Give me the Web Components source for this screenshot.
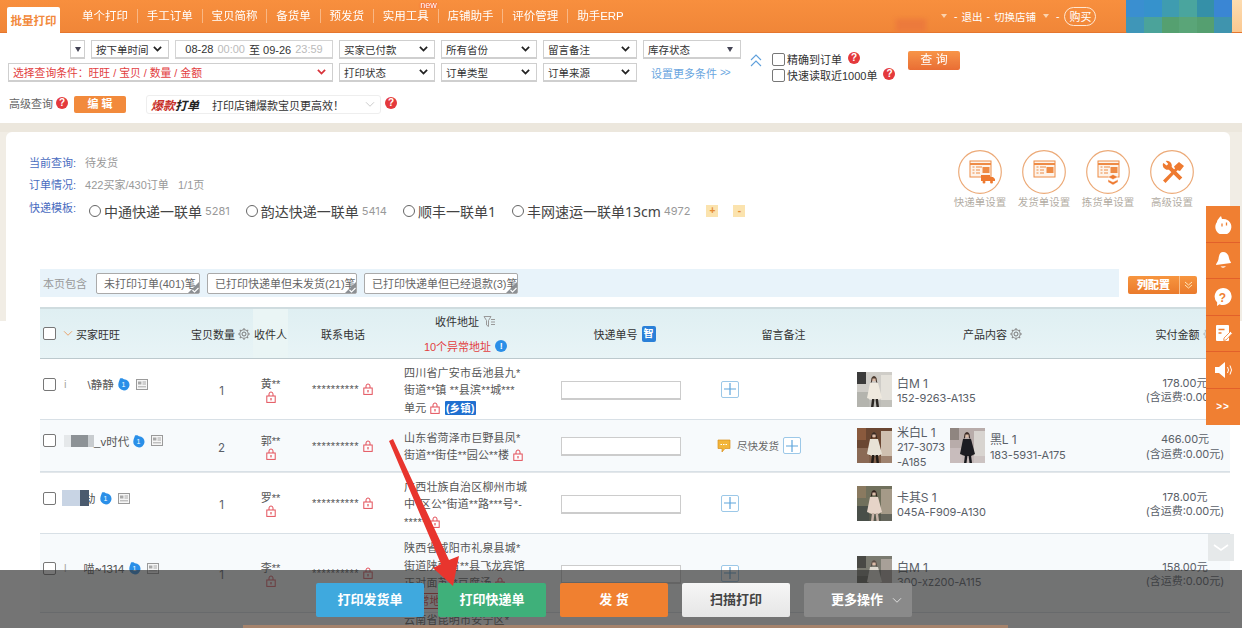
<!DOCTYPE html>
<html lang="zh"><head><meta charset="utf-8"><title>批量打印</title>
<style>
html,body{margin:0;padding:0;width:1242px;height:628px;overflow:hidden;background:#fff}
body{font-family:"Liberation Sans","Noto Sans CJK SC",sans-serif;font-size:12px;color:#444}
</style></head>
<body>
<x-app></x-app>
<script>
const FONT='"Liberation Sans","Noto Sans CJK SC",sans-serif';
const LAT='Inter,"Noto Sans CJK SC",sans-serif';
function def(name,css,html,init){
  customElements.define(name,class extends HTMLElement{
    connectedCallback(){
      if(this.shadowRoot)return;
      const r=this.attachShadow({mode:'open'});
      const body=typeof html==='function'?html(this):html;
      r.innerHTML='<style>'+css+'</style>'+body;
      if(init)init(this,r);
    }
  });
}
const chev=(c,w=9,sw=2)=>`<svg width="${w}" height="${Math.round(w*.65)}" viewBox="0 0 10 6.5"><path d="M1 1l4 4 4-4" fill="none" stroke="${c}" stroke-width="${sw}"/></svg>`;

def('x-help',`:host{display:inline-flex;width:12px;height:12px;border-radius:50%;background:#e4393c;color:#fff;font:bold 10px/12px ${FONT};align-items:center;justify-content:center;flex:none}`,'?');

def('x-check',`:host{display:inline-block;width:11px;height:11px;border:1px solid #777;border-radius:2px;background:#fff;flex:none}`,'');

def('x-lock',`:host{display:inline-block;width:10px;height:12px;vertical-align:-2px;flex:none}svg{display:block}`,
 `<svg width="10" height="12" viewBox="0 0 10 12"><path d="M3 5V3a2 2 0 014 0v2" fill="none" stroke="#e3505a" stroke-width="1"/><rect x=".8" y="5" width="8.4" height="6.4" fill="#fff" fill-opacity=".6" stroke="#e3505a" stroke-width="1"/><rect x="4.4" y="7" width="1.2" height="2.4" fill="#e3505a"/></svg>`);

def('x-plus',`:host{display:inline-flex;box-sizing:border-box;width:18px;height:17px;border:1px solid #9cc8e8;border-radius:2px;background:#fff;align-items:center;justify-content:center;flex:none}`,
 `<svg width="12" height="12" viewBox="0 0 12 12"><path d="M6 0v12M0 6h12" stroke="#5fa6dc" stroke-width="1.2"/></svg>`);

def('x-gear',`:host{display:inline-block;width:12px;height:12px;flex:none;vertical-align:-2px}svg{display:block}`,
 `<svg width="12" height="12" viewBox="0 0 12 12"><circle cx="6" cy="6" r="2" fill="none" stroke="#777" stroke-width="1"/><circle cx="6" cy="6" r="4.2" fill="none" stroke="#888" stroke-width="1.1"/><path d="M6 0v2M6 10v2M0 6h2M10 6h2M1.8 1.8l1.4 1.4M8.8 8.8l1.4 1.4M1.8 10.2l1.4-1.4M8.8 3.2l1.4-1.4" stroke="#888" stroke-width="1.1"/></svg>`);

def('x-drop',`:host{display:inline-block;width:14px;height:14px;flex:none}svg{display:block}`,
 `<svg width="14" height="14" viewBox="0 0 14 14"><path d="M4 1.5C6 .8 7 1.5 8 2.2a5.6 5.6 0 11-5.6 4.6C2.6 5 3.4 3.4 4 1.5z" fill="#2a8fe8"/><text x="7.4" y="10" font-size="7" font-family="Liberation Sans" fill="#fff" text-anchor="middle">1</text></svg>`);

def('x-idcard',`:host{display:inline-block;width:12px;height:11px;flex:none}svg{display:block}`,
 `<svg width="12" height="11" viewBox="0 0 12 11"><rect x=".5" y=".5" width="11" height="10" fill="#f6f6f6" stroke="#9a9a9a"/><rect x="2" y="2.5" width="3.4" height="3" fill="#a8a8a8"/><path d="M6.5 3h3.5M6.5 5h3.5M2 7.8h8" stroke="#a8a8a8"/></svg>`);

def('x-select',`
 :host{display:flex;align-items:center;box-sizing:border-box;height:var(--h,19px);background:#fff;border:1px solid #cfcfcf;border-bottom-width:2px;color:#333;font-size:10.5px;padding:0 6px 0 4px;white-space:nowrap;overflow:hidden}
 :host([red]){color:#e2403f;font-size:10.8px}
 span{flex:1}
 .tri{width:0;height:0;border:3px solid transparent;border-top:5px solid #445;border-bottom:0;margin-right:1px}`,
 h=>`<span><slot></slot></span>`+(h.hasAttribute('tri')?`<i class="tri"></i>`:chev(h.hasAttribute('red')?'#d8333a':'#222')));

def('x-top-nav',`
 :host{display:flex;height:33px;background:linear-gradient(#f88f3e,#f08638);border-bottom:1px solid #e5762e;box-sizing:border-box;color:#fff;font-size:11.5px}
 nav{display:flex;align-items:center;padding-left:7px}
 .on{align-self:flex-end;width:53px;height:26px;background:#fff;color:#f28a3c;font-weight:bold;display:flex;align-items:center;justify-content:center;border-radius:2px 2px 0 0;margin-right:13px;margin-bottom:-1px}
 a{position:relative;padding:0 8.9px;line-height:14px;border-right:1px solid #f9b784;white-space:nowrap}
 a.last{border:0}
 sup{position:absolute;right:1px;top:-8px;font:9px/9px ${FONT};color:#fff;text-shadow:0 0 2px #e33}
 .right{margin-left:auto;display:flex;align-items:center;gap:4px;color:#fff;white-space:nowrap;font-size:10.5px}
 .smudge{width:30px;height:13px;background:#ec7a3c;align-self:flex-end;margin-right:8px;filter:blur(2px)}
 .tri{width:0;height:0;border:3px solid transparent;border-top:4px solid #fbd2ae;border-bottom:0;margin:0 3px}
 .buy{border:1px solid #ffe7d2;border-radius:11px;height:19px;line-height:18px;width:32px;box-sizing:border-box;text-align:center;margin-left:1px;font-size:11px}
 .mosaic{margin-left:30px;display:grid;grid-template-columns:repeat(6,17.6px);grid-auto-rows:17px;height:34px;border-radius:0 0 3px 3px;overflow:hidden;flex:none;align-self:flex-start}
 .edge{width:10px;background:linear-gradient(#fddcb0,#fbc890);flex:none}`,
 `<nav><span class="on">批量打印</span><a>单个打印</a><a>手工订单</a><a>宝贝简称</a><a>备货单</a><a>预发货</a><a>实用工具<sup>new</sup></a><a>店铺助手</a><a>评价管理</a><a class="last">助手ERP</a></nav>
 <div class="right"><i class="smudge"></i><i class="tri"></i><span>-</span><span>退出</span><span>-</span><span>切换店铺</span><i class="tri"></i><span>-</span><span class="buy">购买</span></div>
 <div class="mosaic">${['#3a8fd0','#3692cc','#3f9cb0','#4aa59e','#3590a8','#3a86d4','#3f96b8','#4ba39a','#55a070','#5aa578','#559f70','#3f94ae'].map(c=>`<i style="background:${c}"></i>`).join('')}</div><div class="edge"></div>`);

def('x-filter-panel',`
 :host{display:block;height:90px;background:#fff;box-sizing:border-box;padding-top:7px;position:relative;color:#444}
 .top{display:flex;align-items:flex-start;padding-left:8px}
 .grid{display:grid;grid-template-columns:325px 96px 96px 94px 98px;column-gap:6px;row-gap:4px;grid-template-rows:19px 19px}
 .dates{display:flex;justify-content:flex-end;gap:6px}
 .date{width:158px;box-sizing:border-box;border:1px solid #d4d4d4;border-bottom-width:2px;background:#fff;display:flex;align-items:center;justify-content:center;gap:4px;color:#333;font-size:11px;white-space:nowrap}
 .date i{font-style:normal;color:#bbb}
 .more{color:#6aa6e0;font-size:11px;padding-left:8px;display:flex;align-items:center;white-space:nowrap}
 .more b{font-weight:400;font-size:10px;letter-spacing:-1px;margin-left:3px}
 .up{margin:14px 10px 0 9px;width:12px;flex:none}
 .checks{margin-top:12px;display:flex;flex-direction:column;gap:2px;width:136px;flex:none}
 .checks div{display:flex;align-items:center;gap:2px;height:14px;white-space:nowrap;color:#333;font-size:11px}
 .checks x-help{margin-left:4px;margin-top:-3px}
 .q{margin-top:11px;width:52px;height:19px;background:linear-gradient(#f8903f,#e8662a);border-radius:2px;color:#fff;text-align:center;line-height:19px;font-size:12px;opacity:.95;flex:none}
 .adv{display:flex;align-items:center;padding-left:9px;margin-top:13px;color:#666;font-size:11px}
 .adv>span{margin-top:-3px}
 .edit{width:52px;height:17px;background:#f28a3c;color:#fff;font-weight:bold;text-align:center;line-height:17px;border-radius:2px;margin:0 20px 0 6px;font-size:11px}
 .adv x-help{margin-left:3px;margin-top:-4px}
 .hot{display:flex;align-items:center;width:235px;height:19px;box-sizing:border-box;border:1px solid #eee;border-radius:3px;padding:0 5px 0 4px;color:#333}
 .hot b{font-style:italic;font-size:12px;color:#222;margin-right:13px;white-space:nowrap}
 .hot b em{color:#c8302a;font-style:italic}
 .hot span{flex:1;font-size:11px;white-space:nowrap}
 .hotq{margin-left:4px !important}`,
 `<div class="top">
  <div class="grid">
   <div class="dates"><x-select tri style="width:15px;padding:0 2px;justify-content:flex-end"></x-select><x-select style="width:78px">按下单时间</x-select><div class="date">08-28 <i>00:00</i> 至 09-26 <i>23:59</i></div></div>
   <x-select>买家已付款</x-select><x-select>所有省份</x-select><x-select>留言备注</x-select><x-select tri>库存状态</x-select>
   <x-select red style="--h:19px">选择查询条件：旺旺 / 宝贝 / 数量 / 金额</x-select>
   <x-select>打印状态</x-select><x-select>订单类型</x-select><x-select>订单来源</x-select><div class="more">设置更多条件<b>&gt;&gt;</b></div>
  </div>
  <svg class="up" width="12" height="13" viewBox="0 0 12 13"><path d="M1 6l5-5 5 5M1 12l5-5 5 5" fill="none" stroke="#5fa0dc" stroke-width="1.1"/></svg>
  <div class="checks"><div><x-check></x-check><span>精确到订单</span><x-help></x-help></div><div><x-check></x-check><span>快速读取近1000单</span><x-help></x-help></div></div>
  <div class="q">查 询</div>
 </div>
 <div class="adv"><span>高级查询</span><x-help></x-help><div class="edit">编 辑</div>
  <div class="hot"><b><em>爆款</em>打单</b><span>打印店铺爆款宝贝更高效！</span>${chev('#ccc',10,1)}</div><x-help class="hotq"></x-help></div>`);

const doc=`<rect x="12" y="11" width="21" height="16" fill="#fdf3ea" stroke="#ee8b45" stroke-width="1"/><path d="M12 14h21" stroke="#ee8b45" stroke-width="2"/><path d="M14.5 17h2M14.5 20h2M14.5 23h2M18 17h6M18 20h4M18 23h4" stroke="#ee8b45" stroke-width="1.2"/><rect x="24.5" y="17" width="7" height="6" fill="#ee8b45"/>`;
const setIcons={
 a:doc+`<rect x="23" y="25" width="9" height="6" fill="#ee7a30"/><path d="M32 27h3l2 2v2h-5z" fill="#ee7a30"/><circle cx="26" cy="32" r="1.5" fill="#ee7a30"/><circle cx="33.5" cy="32" r="1.5" fill="#ee7a30"/>`,
 b:doc,
 c:doc+`<path d="M22 27l5-2.5 5 2.5-5 2.5zM22 29.5l5 2.5 5-2.5v2.5l-5 3-5-3z" fill="#ee7a30" stroke="#fff" stroke-width=".5"/>`,
 d:`<path d="M13.500 13l3 2.500 1.800-1.600-2.600-3a5 5 0 016 6l10.600 10.600-2.800 2.800L18.900 19.700a5 5 0 01-6-6z" fill="#ee7a30"/><path d="M13 30.500L25 18.500l-1-2 5-4.500 5 4-4 5-2.500-.8L15.500 33z" fill="#ee7a30"/>`
};
def('x-set-icon',`:host{display:flex;flex-direction:column;align-items:center;width:62px;color:#b3ada4;font-size:10.5px;white-space:nowrap}svg{display:block;margin-bottom:0}`,
 h=>`<svg width="44" height="44" viewBox="0 0 44 44"><circle cx="22" cy="22" r="21.300" fill="#fff" stroke="#ecaa78" stroke-width="1.200"/>${setIcons[h.getAttribute('i')]}</svg><slot></slot>`);

def('x-radio',`:host{display:inline-flex;align-items:center;white-space:nowrap;color:#444;font:14px "Noto Sans","Noto Sans CJK SC",sans-serif;margin-right:var(--m,16px)}
 i{width:10px;height:10px;border:1px solid #666;border-radius:50%;margin-right:3px;flex:none}
 small{font:11px ${LAT};color:#999;margin-left:3px}`,
 h=>`<i></i><slot></slot>${h.getAttribute('n')?`<small>${h.getAttribute('n')}</small>`:''}`);

def('x-query-info',`
 :host{display:flex;padding-top:19px;height:69px;color:#999;font-size:11px}
 .rows{display:flex;flex-direction:column;padding-left:23px}
 .r{height:22px;display:flex;align-items:center;white-space:nowrap}
 label{color:#4a6cc0;margin-right:9px}
 .r.t{align-items:flex-start;padding-top:1px}
 .r.t label{margin:3px 13px 0 0}
 .r.t section{display:flex;align-items:center;margin-top:5px}
 .sq{width:12px;height:12px;background:#fbe3ae;color:#e58a34;display:flex;align-items:center;justify-content:center;font:bold 10px/12px ${FONT};margin:0 15px 0 0}
 .icons{margin-left:auto;margin-right:27px;display:flex;gap:2px;align-self:flex-start;margin-top:-1px}`,
 `<div class="rows"><div class="r"><label>当前查询:</label>待发货</div><div class="r"><label>订单情况:</label>422买家/430订单&nbsp;&nbsp;&nbsp;1/1页</div>
 <div class="r t"><label>快递模板:</label><section><x-radio n="5281">中通快递一联单</x-radio><x-radio n="5414">韵达快递一联单</x-radio><x-radio>顺丰一联单1</x-radio><x-radio n="4972">丰网速运一联单13cm</x-radio><span class="sq">+</span><span class="sq">-</span></section></div></div>
 <div class="icons"><x-set-icon i="a">快递单设置</x-set-icon><x-set-icon i="b">发货单设置</x-set-icon><x-set-icon i="c">拣货单设置</x-set-icon><x-set-icon i="d">高级设置</x-set-icon></div>`);

def('x-tag',`:host{position:relative;display:flex;align-items:center;box-sizing:border-box;height:21px;border:1px solid #aaa;border-radius:2px;background:#fff;color:#666;font-size:11px;padding-left:7px;white-space:nowrap}
 i{position:absolute;right:0;bottom:0;width:0;height:0;border-style:solid;border-width:0 0 11px 11px;border-color:transparent transparent #8b8f93 transparent}
 svg{position:absolute;right:0;bottom:0}`,
 `<slot></slot><i></i><svg width="7" height="6" viewBox="0 0 7 6"><path d="M.5 3l2 2 4-4" fill="none" stroke="#fff" stroke-width="1.100"/></svg>`);

def('x-filter-strip',`
 :host{display:flex;margin-top:49px;align-items:flex-start}
 .s{width:1079px;height:28px;background:#e8f3fa;display:flex;align-items:center;gap:7px;box-sizing:border-box;padding-left:3px;color:#999;font-size:11px;white-space:nowrap}
 .s span{margin-right:2px;width:44px}
 .btn{margin:7px 0 0 9px;width:69px;height:18px;display:flex;background:linear-gradient(#f7953f,#ea7a2c);border-radius:2px;color:#fff;font-weight:bold;font-size:11px;line-height:18px}
 .btn b{flex:1;text-align:center;border-right:1px solid #f9c08c}
 .btn i{width:17px;display:flex;align-items:center;justify-content:center}`,
 `<div class="s"><span>本页包含</span><x-tag style="width:104px">未打印订单(401)笔</x-tag><x-tag style="width:150px">已打印快递单但未发货(21)笔</x-tag><x-tag style="width:154px">已打印快递单但已经退款(3)笔</x-tag></div>
 <div class="btn"><b>列配置</b><i><svg width="9" height="8" viewBox="0 0 9 8"><path d="M1 1l3.500 3L8 1M1 4l3.500 3L8 4" fill="none" stroke="#ffe6b8" stroke-width="1"/></svg></i></div>`);

const thumbs=[
 ['#cfcdc8','#e4e1da','#efe9de','#4a3a30','#2a2624','#b4b4ae','#3a3a3a'],
 ['#6a4630','#cfc0b0','#e8e2d6','#3a2a22','#241c18','#8a6a54','#8a5a3c'],
 ['#b8acaa','#d8d4d0','#1f1f21','#3a2c28','#18181a','#c8bcbc','#8f8580'],
 ['#70705c','#a59a88','#e6d4c8','#30241e','#c8b4a8','#4a5048','#8a7a60'],
 ['#7a7a70','#a8a098','#dedad0','#5a5048','#55504a','#5e5e54','#4a4a44']
];
def('x-thumb',`:host{display:block;width:35px;height:35px;flex:none}svg{display:block}`,h=>{
 const [a,b,c,d,e,f,g]=thumbs[+h.getAttribute('i')];
 return `<svg width="35" height="35" viewBox="0 0 35 35"><defs><filter id="b"><feGaussianBlur stdDeviation=".7"/></filter></defs><g filter="url(#b)"><rect width="35" height="35" fill="${a}"/><rect y="0" width="9" height="12" fill="${g}"/><rect y="20" width="12" height="15" fill="${f}"/><rect x="24" y="3" width="11" height="32" fill="${b}"/><rect y="28" width="35" height="7" fill="${f}" opacity=".7"/><circle cx="17" cy="7" r="2.400" fill="#dcbca8"/><path d="M14.500 6q2.500-4 5 0l.8 5-1.300-1-.5-3.500h-3l-.5 3.500-1.300 1z" fill="${d}"/><path d="M13 11l8 0 4 15-4 2-6 0-5-2z" fill="${c}"/><path d="M15 27l-1 8h2.500l1-8zM18.500 27l1 8h2.500l-1-8z" fill="${e}"/></g></svg>`;
});

def('x-product',`:host{display:flex;gap:5px;align-items:center;font:11px/14.5px ${LAT};letter-spacing:-.1px;color:#5a6068;white-space:nowrap}
 div{display:flex;flex-direction:column;padding-top:4px}
 b{font-weight:400;font-size:12px}`,
 h=>`<x-thumb i="${h.getAttribute('i')}"></x-thumb><div><b>${h.getAttribute('t')}</b>${h.getAttribute('c').split('|').map(s=>`<span>${s}</span>`).join('')}</div>`);

const COLS='150px 63px 35px 104px 155px 148px 150px 295px 90px';
def('x-order-head',`
 :host{display:grid;grid-template-columns:${COLS};height:52px;box-sizing:border-box;border-top:2px solid #cfdcdf;border-bottom:1px solid #bcc9cd;background:linear-gradient(#dfeff2,#e8f4f6);color:#333;font-size:11px}
 :host>div{display:flex;align-items:center;white-space:nowrap;gap:3px}
 .c{justify-content:center}
 .rcp{background:#eaf5f5}
 .bk{padding-left:3px}
 .ad{flex-direction:column;justify-content:center;gap:9px !important;padding-right:8px}
 .ad p{margin:0;display:flex;align-items:center;gap:4px}
 .ad .w{color:#e2403f}
 .info{width:12px;height:12px;border-radius:50%;background:#2a8fe8;color:#fff;font:bold 9px/12px ${FONT};text-align:center}
 .zhi{background:#2a80d8;color:#fff;border-radius:2px;width:14px;height:16px;line-height:16px;text-align:center;font-size:10px;font-weight:bold;margin-left:1px}
 .pre{padding-left:27px}`,
 `<div class="bk"><x-check></x-check><span style="margin:0 0 0 4px;display:inline-flex">${chev('#e9a56e',10,1)}</span><span style="margin-left:0">买家旺旺</span></div>
 <div class="c" style="justify-content:flex-end;padding-right:3px"><span>宝贝数量</span><x-gear></x-gear></div>
 <div class="c rcp">收件人</div>
 <div class="c" style="padding-left:6px">联系电话</div>
 <div class="ad"><p>收件地址<svg width="13" height="13" viewBox="0 0 13 13"><path d="M1 1.500h7L5.500 5.500v6L3.500 10V5.500zM8 7h4M8 9.500h4M8 4.500h4" fill="none" stroke="#999"/></svg></p><p class="w">10个异常地址<span class="info">!</span></p></div>
 <div class="c" style="padding-left:7px">快递单号<span class="zhi">智</span></div>
 <div class="c pre">留言备注</div>
 <div class="c">产品内容<x-gear></x-gear></div>
 <div class="c">实付金额<x-gear style="opacity:.5"></x-gear></div>`);

def('x-order-row',`
 :host{display:grid;grid-template-columns:${COLS};height:var(--h);box-sizing:border-box;border-bottom:1px solid #d8e0e6;background:var(--bg,#fff);color:#555;font-size:11px}
 :host>div{display:flex;align-items:center;white-space:nowrap;min-width:0}
 .c{justify-content:center}
 .buyer{padding:0 0 10px 3px;gap:0;font-size:11.5px;color:#555}
 .buyer x-check{margin-right:var(--g,8px)}
 .buyer x-drop{margin:0 6px 0 2px}
 .col{flex-direction:column;gap:0}
 .phone{padding-left:5px;gap:3px;font:11px ${FONT};letter-spacing:.4px}
 .addr{display:block !important;align-self:center;padding:var(--ap,4px) 0 0 12px;line-height:17.5px;letter-spacing:.2px;white-space:nowrap}
 .tag{background:#1f6fd0;color:#fff;font-weight:bold;padding:1px 1px;border-radius:1px;margin-left:2px;font-size:10.5px}
 .warn{border:1px solid #d23c3c;color:#d23c3c;padding:0 2px;line-height:14px;display:inline-block}
 .wb{padding:2px 0 0 14px}
 .wb i{display:block;box-sizing:border-box;width:120px;height:19px;border:1px solid #ccc;border-bottom-width:2px;background:#fff}
 .rem{padding-left:var(--rp,26px);gap:6px;color:#666;font-size:10.5px}
 .bubble{flex:none}
 .pro{padding-left:12px;gap:5px}
 .amt{flex-direction:column;justify-content:center;padding-top:2px;font:11px/14.5px ${LAT};color:#5a6068}
 .qty{font:11.5px ${LAT};color:#5a6068;padding-top:4px}
 .tail{grid-column:5;align-self:start;padding:0 0 0 12px;line-height:14px;letter-spacing:.2px;display:block !important}`,
 h=>{const d=JSON.parse(h.getAttribute('data-o'));
 if(d.tail) return `<div class="tail">${d.tail}</div>`;
 return `<div class="buyer" style="--g:${d.g||8}px"><x-check></x-check>${d.b}<x-drop></x-drop><x-idcard></x-idcard></div>
 <div class="c qty">${d.q}</div>
 <div class="c col"><span>${d.n}</span><x-lock></x-lock></div>
 <div class="c phone"><span>**********</span><x-lock style="margin-left:1px"></x-lock></div>
 <div class="addr" ${d.ap!==undefined?`style="--ap:${d.ap}px"`:''}>${d.a}</div>
 <div class="wb"><i></i></div>
 <div class="rem" style="--rp:${d.r?22:26}px">${d.r?`<svg class="bubble" width="14" height="14" viewBox="0 0 14 14"><path d="M1 1h12v8.500H8L5 13V9.500H1z" fill="#f2b53a" stroke="#d88f20" stroke-width=".7"/><path d="M3.500 5.500h7" stroke="#fff" stroke-dasharray="1.500 1"/></svg><span style="margin-right:-2px">${d.r}</span>`:''}<x-plus></x-plus></div>
 <div class="pro">${d.p.map(p=>`<x-product i="${p[0]}" t="${p[1]}" c="${p[2]}"></x-product>`).join('')}</div>
 <div class="amt c"><span>${d.m}</span><span>(含运费:0.00元)</span></div>`});

def('x-order-table',`:host{display:block}`,
 r=>{
  const rows=[
   {h:61,bg:'#fff',g:8,b:`<span style="color:#aaa">i</span><span style="display:inline-block;width:21px"></span><span>\\静静</span>`,q:1,n:'黄**',a:`四川省广安市岳池县九*<br>街道**镇 **县滨**城***<br>单元 <x-lock></x-lock> <span class="tag">(乡镇)</span>`,p:[[0,'白M 1','152-9263-A135']],m:'178.00元'},
   {h:52,bg:'#f7fafc',g:0,ap:3,b:`<span style="display:inline-block;width:30px;height:12px;background:linear-gradient(90deg,#e5e8ea 0 25%,#8d9296 25% 80%,#c8cccf 80%);filter:blur(.6px)"></span><span>_v时代</span>`,q:2,n:'郭**',a:`山东省菏泽市巨野县凤*<br>街道**街佳**园公**楼 <x-lock></x-lock>`,r:'尽快发货',p:[[1,'米白L 1','217-3073|-A185'],[2,'黑L 1','183-5931-A175']],m:'466.00元'},
   {h:61,bg:'#fff',g:6,top:1,b:`<span style="display:inline-block;width:27px;height:16px;position:relative;z-index:1;background:linear-gradient(90deg,#c8d4e4 0 66%,#4a5a6e 66%)"></span><span style="margin-left:-5px">劫</span>`,q:1,n:'罗**',a:`广西壮族自治区柳州市城<br>中*区公*街道**路***号*-<br>***** <x-lock></x-lock>`,p:[[3,'卡其S 1','045A-F909-A130']],m:'178.00元'},
   {h:79,bg:'#f7fafc',g:8,b:`<span style="color:#aaa">l</span><span style="display:inline-block;width:17px"></span><span style="font-size:11px;font-family:Inter,'Noto Sans CJK SC'">喵~1314</span>`,q:1,n:'李**',a:`陕西省咸阳市礼泉县城*<br>街道陕西省**县飞龙宾馆<br>正对面苏**豆腐汤 <x-lock></x-lock><br><span class="warn">异常地址</span>`,p:[[4,'白M 1','300-xz200-A115']],m:'158.00元'},
   {h:15,bg:'#fff',tail:'云南省昆明市安宁区*'}
  ];
  return `<x-order-head></x-order-head>`+rows.map(o=>`<x-order-row data-o='${JSON.stringify(o).replace(/'/g,"&#39;")}' style="--h:${o.h}px;--bg:${o.bg};${o.tail?'border:0;':''}${o.top?'margin-top:1px;box-shadow:0 -1px 0 #e3e7ea':''}"></x-order-row>`).join('');
 });

def('x-main-card',`
 :host{display:block;background:linear-gradient(#ece7dd 0 9px,#f1ede5 9px 198px,#fff 198px);padding:9px 12px 0 6px;flex:1;min-height:0}
 .card{background:#fff;border-radius:6px 6px 0 0;height:100%;box-sizing:border-box;padding-left:34px;overflow:hidden}`,
 `<div class="card"><x-query-info style="margin-left:-34px"></x-query-info><x-filter-strip></x-filter-strip><x-order-table style="margin-top:10px"></x-order-table></div>`);

const rail={
 a:`<path d="M4 8c0-2 3-5 4-6l1 3a8 8 0 11-5 3z" fill="#fff"/><path d="M9 9.500v3M13.500 8.500v3" stroke="#f07f32" stroke-width="1.300"/>`,
 b:`<path d="M10 2c4 0 5.500 3 6 6 .4 2.500 2 3.500 2 5L3 15c0-2 2-3 2.500-6C6 5 7 2 10 2z" fill="#fff"/><path d="M7.500 16.500q3 2.500 5.500-.3z" fill="#fff"/>`,
 c:`<path d="M10 1a8.500 8.500 0 11-3.500 16.200L4 19l.2-3.500A8.500 8.500 0 0110 1z" fill="#fff"/><text x="10" y="14.500" font-size="12" font-weight="bold" font-family="Liberation Sans" fill="#f07f32" text-anchor="middle">?</text>`,
 d:`<rect x="3" y="2" width="13" height="16" rx="1" fill="#fff"/><path d="M5.500 6.500h6M5.500 10h3" stroke="#f07f32" stroke-width="1.500"/><path d="M11 15l6.500-6.500 1.800 1.800L13 17l-2.300.4z" fill="#fff" stroke="#f07f32" stroke-width=".8"/>`,
 e:`<path d="M2 7h4l6-5v16l-6-5H2z" fill="#fff"/><path d="M14.500 7q2 3 0 6M17 5.500q3 4.500 0 9" fill="none" stroke="#fff" stroke-width="1"/>`
};
def('x-side-rail',`
 :host{position:absolute;left:1206px;top:206px;width:34px;display:flex;flex-direction:column;background:#f07f32}
 div{height:36.5px;box-sizing:border-box;display:flex;align-items:center;justify-content:center;border-bottom:1px solid #e2602a;color:#fff;font:bold 10px ${FONT};letter-spacing:1px}
 div:last-child{border:0}`,
 Object.keys(rail).map(k=>`<div><svg width="20" height="20" viewBox="0 0 20 20">${rail[k]}</svg></div>`).join('')+`<div>&gt;&gt;</div>`);

def('x-scroll-tab',`:host{position:absolute;left:1208px;top:534px;width:26px;height:27px;background:#e6e9ea;display:flex;align-items:center;justify-content:center}`,
 `<svg width="16" height="8" viewBox="0 0 16 8"><path d="M1 1l7 5 7-5" fill="none" stroke="#fff" stroke-width="1.600"/></svg>`);

def('x-bottom-bar',`
 :host{position:absolute;left:0;right:0;bottom:0;height:58px;background:rgba(50,50,50,.68);display:flex;justify-content:center;gap:14px;padding:13px 14px 0 0;box-sizing:border-box}
 button{all:unset;box-sizing:border-box;width:108px;height:34px;text-align:center;color:#fff;font:bold 13px/34px ${FONT};border-radius:2px;white-space:nowrap}
 .a{background:#3fa9de}.b{background:#3fb07a}.c{background:#f08030}
 .d{background:linear-gradient(#f6f6f6,#e6e6e6);color:#444}
 .e{background:#8a8a8a;display:flex;align-items:center;justify-content:flex-start;padding-left:27px;gap:9px}
 .line{position:absolute;left:243px;width:765px;bottom:0;height:3px;background:#a5836c}`,
 `<i class="line"></i><button class="a">打印发货单</button><button class="b">打印快递单</button><button class="c">发 货</button><button class="d">扫描打印</button><button class="e">更多操作${chev('#ddd',10,1)}</button>`);

def('x-arrow',`:host{position:absolute;left:0;top:0;width:1242px;height:628px;pointer-events:none}svg{display:block}`,
 `<svg width="1242" height="628"><polygon points="389,441 393,439 449,560 459,556 453,586 433,568 441,564" fill="#e8352e"/></svg>`);

def('x-app',`
 :host{display:flex;flex-direction:column;position:relative;width:1242px;height:628px;overflow:hidden;filter:blur(.35px);font-family:${FONT}}`,
 `<x-top-nav></x-top-nav><x-filter-panel></x-filter-panel><x-main-card></x-main-card><x-scroll-tab></x-scroll-tab><x-bottom-bar></x-bottom-bar><x-side-rail></x-side-rail><x-arrow></x-arrow>`);
</script>
</body></html>
